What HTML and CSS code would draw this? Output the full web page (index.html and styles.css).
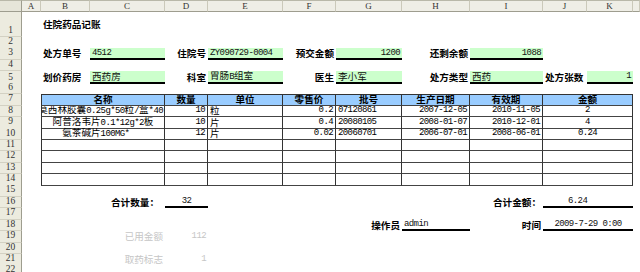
FILE: index.html
```html
<!DOCTYPE html>
<html lang="zh-CN">
<head>
<meta charset="utf-8">
<title>住院药品记账</title>
<link rel="stylesheet" href="styles.css">
</head>
<body>
<div class="sheet">
  <div class="row hd">
    <div class="corner"></div><div>A</div><div>B</div><div>C</div><div>D</div><div>E</div><div>F</div><div>G</div><div>H</div><div>I</div><div>J</div><div>K</div><div></div>
  </div>
  <div class="row r1"><div class="rh">1</div><div class="cB l b">住院药品记账</div></div>
  <div class="row"><div class="rh">2</div></div>
  <div class="row">
    <div class="rh">3</div>
    <div class="cB l b">处方单号</div>
    <div class="cC in l m">4512</div>
    <div class="cD r b">住院号</div>
    <div class="cE in l m">ZY090729-0004</div>
    <div class="cF r b">预交金额</div>
    <div class="cG in r m">1200</div>
    <div class="cH r b">还剩余额</div>
    <div class="cI in r m">1088</div>
  </div>
  <div class="row"><div class="rh">4</div></div>
  <div class="row">
    <div class="rh">5</div>
    <div class="cB l b">划价药房</div>
    <div class="cC in l">西药房</div>
    <div class="cD r b">科室</div>
    <div class="cE in l"><span>胃肠<span class="m">B</span>组室</span></div>
    <div class="cF r b">医生</div>
    <div class="cG in l">李小军</div>
    <div class="cH r b">处方类型</div>
    <div class="cI in l">西药</div>
    <div class="cJ l b">处方张数</div>
    <div class="cK in r m">1</div>
  </div>
  <div class="row"><div class="rh">6</div></div>
  <div class="row">
    <div class="rh">7</div>
    <div class="cBC t th first">名称</div>
    <div class="cD t th">数量</div>
    <div class="cE t th">单位</div>
    <div class="cF t th">零售价</div>
    <div class="cG t th">批号</div>
    <div class="cH t th">生产日期</div>
    <div class="cI t th">有效期</div>
    <div class="cJK t th">金额</div>
  </div>
  <div class="row">
    <div class="rh">8</div>
    <div class="cBC t first clip"><span class="tx">阿莫西林胶囊<span class="m">0.25g*50</span>粒<span class="m">/</span>盒<span class="m">*40</span></span></div>
    <div class="cD t r m">10</div>
    <div class="cE t l">粒</div>
    <div class="cF t r m">0.2</div>
    <div class="cG t l m">07120861</div>
    <div class="cH t r m">2007-12-05</div>
    <div class="cI t r m">2010-11-05</div>
    <div class="cJK t c m">2</div>
  </div>
  <div class="row">
    <div class="rh">9</div>
    <div class="cBC t first c"><span class="tx">阿普洛韦片<span class="m">0.1*12g*2</span>板</span></div>
    <div class="cD t r m">10</div>
    <div class="cE t l">片</div>
    <div class="cF t r m">0.4</div>
    <div class="cG t l m">20080105</div>
    <div class="cH t r m">2008-01-07</div>
    <div class="cI t r m">2010-12-01</div>
    <div class="cJK t c m">4</div>
  </div>
  <div class="row">
    <div class="rh">10</div>
    <div class="cBC t first c"><span class="tx">氨茶碱片<span class="m pre">100MG*   </span></span></div>
    <div class="cD t r m">12</div>
    <div class="cE t l">片</div>
    <div class="cF t r m">0.02</div>
    <div class="cG t l m">20060701</div>
    <div class="cH t r m">2006-07-01</div>
    <div class="cI t r m">2008-06-01</div>
    <div class="cJK t c m">0.24</div>
  </div>
  <div class="row">
    <div class="rh">11</div>
    <div class="cBC t first"></div><div class="cD t"></div><div class="cE t"></div><div class="cF t"></div><div class="cG t"></div><div class="cH t"></div><div class="cI t"></div><div class="cJK t"></div>
  </div>
  <div class="row">
    <div class="rh">12</div>
    <div class="cBC t first"></div><div class="cD t"></div><div class="cE t"></div><div class="cF t"></div><div class="cG t"></div><div class="cH t"></div><div class="cI t"></div><div class="cJK t"></div>
  </div>
  <div class="row">
    <div class="rh">13</div>
    <div class="cBC t first"></div><div class="cD t"></div><div class="cE t"></div><div class="cF t"></div><div class="cG t"></div><div class="cH t"></div><div class="cI t"></div><div class="cJK t"></div>
  </div>
  <div class="row">
    <div class="rh">14</div>
    <div class="cBC t first"></div><div class="cD t"></div><div class="cE t"></div><div class="cF t"></div><div class="cG t"></div><div class="cH t"></div><div class="cI t"></div><div class="cJK t"></div>
  </div>
  <div class="row"><div class="rh">15</div></div>
  <div class="row">
    <div class="rh">16</div>
    <div class="cC r b pr6">合计数量：</div>
    <div class="cD ul c m">32</div>
    <div class="cI r b">合计金额：</div>
    <div class="cJK ul l m pl25">6.24</div>
  </div>
  <div class="row"><div class="rh">17</div></div>
  <div class="row">
    <div class="rh">18</div>
    <div class="cG r b">操作员</div>
    <div class="cH ul l m">admin</div>
    <div class="cI r b">时间</div>
    <div class="cJK ul c m">2009-7-29 0:00</div>
  </div>
  <div class="row">
    <div class="rh">19</div>
    <div class="cC r g">已用金额</div>
    <div class="cD r g m">112</div>
  </div>
  <div class="row"><div class="rh">20</div></div>
  <div class="row">
    <div class="rh">21</div>
    <div class="cC r g">取药标志</div>
    <div class="cD r g m">1</div>
  </div>
  <div class="row"><div class="rh">22</div></div>
</div>
</body>
</html>
```
FILE: styles.css
```css
* { box-sizing: border-box; margin: 0; padding: 0; }
html, body { width: 640px; height: 272px; overflow: hidden; background: #fff; }
body { font-family: "Noto Sans CJK SC", sans-serif; font-size: 9.6px; color: #111; }

.sheet { display: flex; flex-direction: column; width: 640px; }

.row {
  display: grid;
  grid-template-columns: 22px 19px 49px 75px 43px 75px 53px 66px 68px 73px 44px 46px 7px;
  height: 11.43px;
  flex: none;
}
.row > * {
  grid-row: 1;
  display: flex;
  align-items: center;
  white-space: nowrap;
  line-height: 1;
}
.row.hd { height: 12px; }
.row.r1 { height: 25px; }

/* column header */
.hd > div {
  background: #EFEEE6;
  border-top: 1px solid #B9B8A9;
  border-right: 1px solid #CBC9BA;
  border-bottom: 1px solid #9E9D8F;
  justify-content: center;
  font-family: "Liberation Serif", serif;
  font-size: 9px;
  color: #333;
}
.hd > .corner { background: #E6E5D9; border-right-color: #9E9D8F; }

/* row header */
.rh {
  grid-column: 1;
  background: #ECEBDF;
  border-right: 1px solid #9E9D8F;
  border-bottom: 1px solid #D3D1C3;
  justify-content: center;
  align-items: flex-end !important;
  padding-bottom: 1px;
  font-family: "Liberation Serif", serif;
  font-size: 9.5px;
  color: #333;
}

/* columns */
.cB { grid-column: 3; }
.cC { grid-column: 4; }
.cD { grid-column: 5; }
.cE { grid-column: 6; }
.cF { grid-column: 7; }
.cG { grid-column: 8; }
.cH { grid-column: 9; }
.cI { grid-column: 10; }
.cJ { grid-column: 11; }
.cK { grid-column: 12; }
.cBC { grid-column: 3 / 5; }
.cJK { grid-column: 11 / 13; }

/* alignment */
.l { justify-content: flex-start; padding-left: 2px; }
.r { justify-content: flex-end; padding-right: 2px; }
.c { justify-content: center; }
.pr6 { padding-right: 6px; }
.pl25 { padding-left: 25px; }

/* text */
.b { font-weight: 700; color: #000; }
.m { font-family: "Liberation Mono", monospace; font-size: 9px; letter-spacing: -0.6px; }
.pre { white-space: pre; }
.g { color: #C6C6C6; }
.tx { flex: none; white-space: nowrap; }

/* input fields */
.in { background: #CCFFCC; border-bottom: 2px solid #000; }
.ul { border-bottom: 2px solid #000; }

/* table */
.t { border-right: 1px solid #333; border-bottom: 1px solid #444; color: #000; }
.t.first { border-left: 1px solid #333; }
.th { background: #99CCFF; font-weight: 700; justify-content: center; border-top: 1px solid #333; }
.clip { overflow: hidden; justify-content: flex-end; padding-right: 1px; }
```
